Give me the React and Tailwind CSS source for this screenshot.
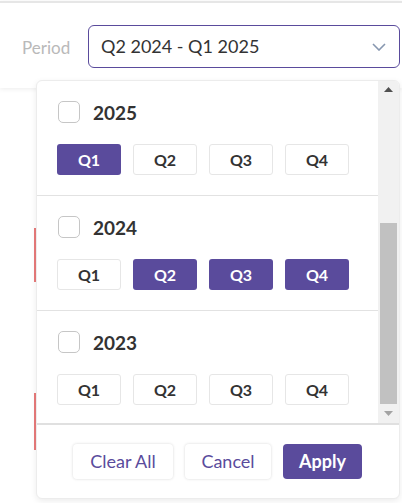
import React from "react";

const PURPLE = "bg-[#5a4b9c]";

function QButton({ label, active }) {
  return (
    <div
      className={
        active
          ? "w-[64px] h-[31px] rounded-[3px] bg-[#5a4b9c] text-white font-bold text-[16px] flex items-center justify-center"
          : "w-[64px] h-[31px] rounded-[3px] border border-[#e6e6e6] bg-white text-[#333] font-bold text-[16px] flex items-center justify-center"
      }
    >
      {label}
    </div>
  );
}

function YearSection({ year, selected }) {
  return (
    <div className="px-5 pt-5 pb-5 border-b border-[#e2e2e2]">
      <div className="flex items-center h-[22px]">
        <div className="w-[22px] h-[22px] ml-px rounded-[5px] border border-[#c6c6c6] bg-white" />
        <span className="ml-[13px] text-[19px] font-bold text-[#333] leading-none">{year}</span>
      </div>
      <div className="flex gap-[12px] mt-[21px]">
        {["Q1", "Q2", "Q3", "Q4"].map((q) => (
          <QButton key={q} label={q} active={selected.includes(q)} />
        ))}
      </div>
    </div>
  );
}

export default function App() {
  return (
    <div
      className="relative w-[402px] h-[503px] overflow-hidden bg-white"
      style={{ fontFamily: "Lato, 'Open Sans', sans-serif" }}
    >
      {/* header */}
      <div className="mt-px h-[87px] border-t-2 border-[#e6e6e6] bg-white shadow-[0_1px_5px_rgba(0,0,0,0.08)] flex items-start pt-[22px] relative z-0">
        <span className="ml-[22px] mt-[10px] text-[17px] text-[#b9b9b9] w-[66px]">Period</span>
        <div className="w-[312px] h-[43px] rounded-[6px] border border-[#5a4b9c] flex items-center justify-between pl-[12px] pr-[13px]">
          <span className="text-[18px] text-[#333]">Q2 2024 - Q1 2025</span>
          <svg width="14" height="8" viewBox="0 0 14 8" fill="none">
            <path d="M1 1l6 6 6-6" stroke="#8797b0" strokeWidth="1.6" />
          </svg>
        </div>
      </div>

      {/* background content */}
      <div className="flex">
        <div className="w-[36px] flex flex-col items-end">
          <div className="h-[140px]" />
          <div className="w-[2px] h-[54px] bg-[#e87a7a]" />
          <div className="h-[111px]" />
          <div className="w-[2px] h-[57px] bg-[#e87a7a]" />
        </div>
      </div>

      {/* dropdown */}
      <div className="absolute left-[36px] top-[80px] w-[364px] h-[419px] rounded-[6px] bg-white border border-[#ececec] shadow-[0_2px_6px_rgba(0,0,0,0.08)] flex flex-col overflow-hidden">
        <div className="h-[342px] flex">
          <div className="flex-1 overflow-hidden">
            <YearSection year="2025" selected={["Q1"]} />
            <YearSection year="2024" selected={["Q2", "Q3", "Q4"]} />
            <YearSection year="2023" selected={[]} />
          </div>
          {/* scrollbar */}
          <div className="w-[21px] bg-[#f1f1f1] flex flex-col items-center">
            <div className="h-[17px] w-full flex items-center justify-center">
              <svg width="9" height="5" viewBox="0 0 9 5">
                <path d="M0 5L4.5 0L9 5z" fill="#505050" />
              </svg>
            </div>
            <div className="h-[125px]" />
            <div className="w-[17px] h-[181px] bg-[#c1c1c1]" />
            <div className="flex-1 w-full flex items-center justify-center">
              <svg width="9" height="5" viewBox="0 0 9 5">
                <path d="M0 0L9 0L4.5 5z" fill="#a3a3a3" />
              </svg>
            </div>
          </div>
        </div>
        <div className="flex-1 border-t-2 border-[#e0e0e0] flex items-center justify-center gap-3 pr-px">
          <div className="w-[100px] h-[35px] rounded-[4px] bg-white shadow-[0_0_3px_rgba(0,0,0,0.16)] flex items-center justify-center text-[18px] text-[#5a4b9c]">
            Clear All
          </div>
          <div className="w-[86px] h-[35px] rounded-[4px] bg-white shadow-[0_0_3px_rgba(0,0,0,0.16)] flex items-center justify-center text-[18px] text-[#5a4b9c]">
            Cancel
          </div>
          <div className={`w-[79px] h-[35px] rounded-[4px] ${PURPLE} flex items-center justify-center text-[18px] font-bold text-white`}>
            Apply
          </div>
        </div>
      </div>
    </div>
  );
}
